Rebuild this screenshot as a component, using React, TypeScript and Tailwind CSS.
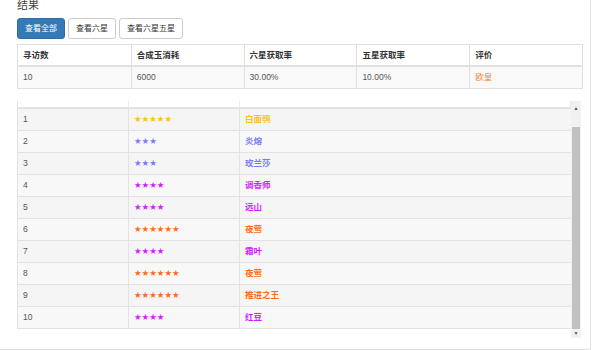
import React from "react";

const summary = {
  headers: ["寻访数", "合成玉消耗", "六星获取率", "五星获取率", "评价"],
  values: ["10", "6000", "30.00%", "10.00%", "欧皇"],
};

const colorByStar: Record<number, string> = {
  3: "text-[#7b7bff]",
  4: "text-[#d21eff]",
  5: "text-[#ffc20e]",
  6: "text-[#ff6a1a]",
};

const pulls = [
  { n: 1, star: 5, name: "白面鸮" },
  { n: 2, star: 3, name: "炎熔" },
  { n: 3, star: 3, name: "玫兰莎" },
  { n: 4, star: 4, name: "调香师" },
  { n: 5, star: 4, name: "远山" },
  { n: 6, star: 6, name: "夜莺" },
  { n: 7, star: 4, name: "霜叶" },
  { n: 8, star: 6, name: "夜莺" },
  { n: 9, star: 6, name: "推进之王" },
  { n: 10, star: 4, name: "红豆" },
];

export default function App() {
  return (
    <div className="w-[591px] h-[350px] overflow-hidden bg-white border-r border-b border-[#e2e2e2] text-[#333] font-['Liberation_Sans','Noto_Sans_CJK_SC',sans-serif]">
      <div className="pl-[17px]">
        <div className="text-[11px] leading-[12px] -mt-[1px] h-[12px] text-[#444]">结果</div>

        <div className="flex gap-[3px] mt-[7px]">
          <button className="h-[21px] px-[7px] text-[8px] rounded-[3px] bg-[#337ab7] border border-[#2e6da4] text-white">查看全部</button>
          <button className="h-[21px] px-[7px] text-[8px] rounded-[3px] bg-white border border-[#cccccc] text-[#333]">查看六星</button>
          <button className="h-[21px] px-[7px] text-[8px] rounded-[3px] bg-white border border-[#cccccc] text-[#333]">查看六星五星</button>
        </div>

        <div className="mt-[5px] w-[566px] border border-[#e0e0e0] text-[8.5px]">
          <div className="grid grid-cols-5 h-[22px] border-b-2 border-[#e0e0e0] bg-white">
            {summary.headers.map((h, i) => (
              <div key={i} className={`flex items-center px-[5px] font-bold text-[#333] ${i > 0 ? "border-l border-[#e0e0e0]" : ""}`}>{h}</div>
            ))}
          </div>
          <div className="grid grid-cols-5 h-[21px] bg-[#f9f9f9]">
            {summary.values.map((v, i) => (
              <div key={i} className={`flex items-center px-[5px] ${i === 4 ? "text-[#f08040]" : "text-[#555]"} ${i > 0 ? "border-l border-[#e0e0e0]" : ""}`}>{v}</div>
            ))}
          </div>
        </div>

        <div className="mt-[12px] w-[564px] h-[237px] flex">
          <div className="w-[554px] text-[8.5px]">
            <div className="grid grid-cols-[110px_111px_1fr] h-[8px] border-b-2 border-[#e3e3e3] border-l border-r">
              <div className="border-[#ededed]"></div>
              <div className="border-l border-[#ededed]"></div>
              <div className="border-l border-[#ededed]"></div>
            </div>
            {pulls.map((p) => (
              <div
                key={p.n}
                className={`grid grid-cols-[110px_111px_1fr] h-[22px] border-b border-l border-[#e3e3e3] ${p.n % 2 ? "bg-[#f5f5f5]" : "bg-[#f8f8f8]"}`}
              >
                <div className="flex items-center px-[5px] text-[#555]">{p.n}</div>
                <div className={`flex items-center px-[5px] border-l border-[#e3e3e3] font-['DejaVu_Sans',sans-serif] text-[8.5px] ${colorByStar[p.star]}`}>
                  {"★".repeat(p.star)}
                </div>
                <div className={`flex items-center px-[5px] border-l border-[#e3e3e3] font-bold ${colorByStar[p.star]}`}>{p.name}</div>
              </div>
            ))}
          </div>
          <div className="w-[10px] h-full bg-[#f1f1f1] flex flex-col items-center">
            <div className="h-[14px] flex items-center justify-center text-[#505050] text-[5px] leading-none">▲</div>
            <div className="mt-[12px] w-[8px] h-[202px] bg-[#c1c1c1]"></div>
            <div className="flex-1 flex items-center justify-center text-[#505050] text-[5px] leading-none">▼</div>
          </div>
        </div>
      </div>
    </div>
  );
}
